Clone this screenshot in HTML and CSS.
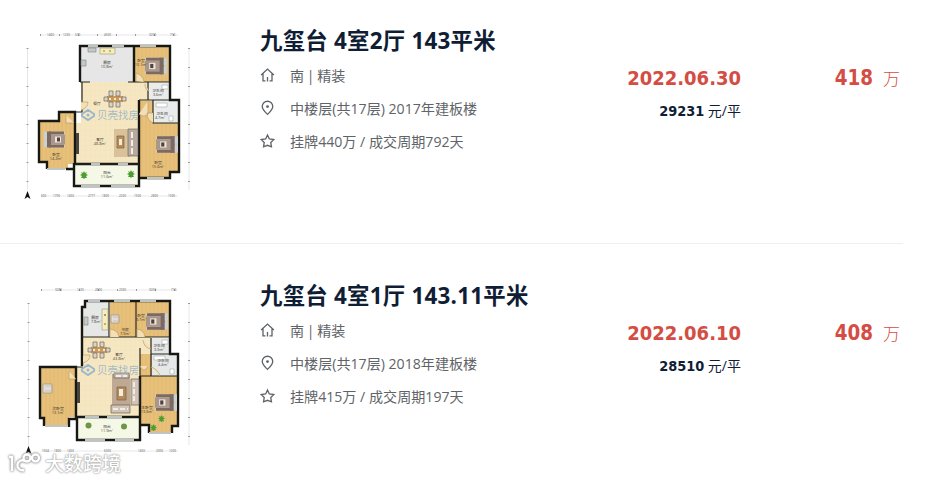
FILE: index.html
```html
<!DOCTYPE html>
<html lang="zh-CN">
<head>
    <meta charset="UTF-8">
    <meta name="viewport" content="width=device-width, initial-scale=1.0">
    <title>九玺台 成交房源</title>
    <link rel="stylesheet" href="styles.css">
</head>
<body>
    <!-- Shared icons and furniture -->
    <svg class="symbols" width="0" height="0">
        <symbol id="icon-home" viewBox="0 0 16 16">
            <path d="M1.200 8 8 1.700 14.800 8M3.200 6.500V14.200h2.600M12.800 6.500V14.200h-2.600M8 14.800V10"/>
        </symbol>
        <symbol id="icon-pin" viewBox="0 0 16 16">
            <path d="M8 14.800C5.500 12.200 2.400 9.600 2.400 6.400a5.600 5.600 0 0 1 11.200 0C13.600 9.600 10.500 12.200 8 14.800Z"/>
            <circle class="dot" cx="8" cy="6.500" r="1.500"/>
        </symbol>
        <symbol id="icon-star" viewBox="0 0 16 16">
            <path d="m8 1.700 2 4.100 4.800.600-3.300 3.300.700 4.500L8 12.600l-4.200 1.600.700-4.500L1.200 6.400 6 5.800Z"/>
        </symbol>
        <symbol id="bed" viewBox="0 0 22 18">
            <path fill="#dcc8ae" d="M0 1h21v16H0z"/>
            <path fill="#7b6a62" d="M1 1h15v3H1zM1 14h15v3H1z"/>
            <path fill="#a8978c" d="M0 4h16v10H0z"/>
            <path fill="#f1e5d8" d="M4 6h6v6H4z"/>
            <path fill="#4f433f" d="M5 7h3v4H5z"/>
            <path fill="#7c6a62" d="M14 1h4v16h-4z"/>
            <path fill="#c6d2d8" d="M18 2h3v6h-3zM18 10h3v6h-3z"/>
        </symbol>
        <symbol id="dining" viewBox="0 0 24 18">
            <path fill="#c9995a" d="M4 6h16v6H4z"/>
            <path fill="#d9d5c9" stroke="#70665d" stroke-width=".7" d="M6 1h4v5H6zM13 1h4v5h-4zM6 12h4v5H6zM13 12h4v5h-4zM1 7h4v4H1zM19 7h4v4h-4z"/>
            <path stroke="#f6e8cf" stroke-width="2" stroke-dasharray="2 3" d="M6 9h13"/>
        </symbol>
        <symbol id="plant" viewBox="0 0 8 8">
            <path fill="#4c9d32" d="m4 0 1 2 2-1-1 2 2 1-2 1 1 2-2 0-1 1-1-1-2 0 1-2-2-1 2-1-1-2 2 1Z"/>
        </symbol>
        <symbol id="shell" viewBox="0 0 14 12">
            <path fill="none" stroke="#9bb7cf" stroke-width="2" d="m1 5 6-4 6 4v2l-6 4-6-4Z"/>
            <circle fill="#9bb7cf" cx="7" cy="6" r="1.500"/>
        </symbol>
        <pattern id="wood" width="8" height="6" patternUnits="userSpaceOnUse">
            <path fill="#e7c07a" d="M0 0h8v6H0z"/>
            <path stroke="#dcb167" stroke-width=".5" d="M2 0v6M6 0v6"/>
        </pattern>
        <pattern id="tile" width="5" height="5" patternUnits="userSpaceOnUse">
            <path fill="#f5e7c1" d="M0 0h5v5H0z"/>
            <path fill="none" stroke="#efdfb4" stroke-width=".5" d="M0 0h5M0 0v5"/>
        </pattern>
    </svg>

    <main class="list">
        <article class="item">
            <svg class="plan" viewBox="20 25 175 180">
                <!-- Measurements -->
                <g class="ruler">
                    <path d="M40 35h138M27.500 48v142M189 48v142M41 196h137"/>
                    <path class="ticks" d="M40 35h138M27.500 48v142M189 48v142"/>
                    <text x="47" y="36">1460</text><text x="63" y="36">1230</text><text x="75" y="36">570</text><text x="104" y="36">4500</text><text x="149" y="36">3200</text><text x="170" y="36">710</text>
                    <text x="41" y="197">600</text><text x="53" y="197">1700</text><text x="67" y="197">1450</text><text x="88" y="197">2777</text><text x="102" y="197">1800</text><text x="119" y="197">2230</text><text x="134" y="197">1500</text><text x="151" y="197">2800</text><text x="168" y="197">1590</text>
                </g>
                <path fill="#111" d="m27.500 191 3 8-3-2-3 2z"/>
                <!-- Rooms -->
                <path fill="url(#tile)" d="M81 82h68v20h-10v62H75v-41h6z"/>
                <path fill="#e6e6e6" d="M81 47h53v35H81z"/>
                <path fill="url(#wood)" d="M135 47h34v35h-34zM139 101h14v22h27v49h-9v6h-32zM59 113h16v51h-7v5H46v-7h-6v-40h19z"/>
                <path fill="#e9eceb" d="M149 83h20v18h-20zM153 101h27v22h-27z"/>
                <path fill="#f5f8e7" d="M75 164h64v21H75z"/>
                <path class="walls" d="M80 82V46h90v54h9v72h-9v6h-31v8H74v-17M74 163v6H66M47 169v-7h-8v-41h20v-9h16v52h65M134 46v36M139 100v78"/>
                <path class="thin" d="M134 82h36M153 101v22h27M80 82h10M128 82h20v18h21M139 100h14v23M75 112h7v-30M75 164h64"/>
                <path class="window" d="M88 46h10M112 46h12M140 46h16M47 169h18M81 186h19M111 186h24M147 178h17M91 164h9M118 164h10"/>
                <path class="door" d="M136 81v-8q7 2 8 9M81 102h7q0 6-7 8M66 115v8h8M139 114q5 4 9 0V101M149 91q-4-1-4-7M153 113h-6q0 7 6 10"/>
                <!-- Furniture -->
                <path fill="#c4c8c7" stroke="#7d8080" stroke-width=".6" d="M88 48h8v4h-8zM81 60h5v6h-5z"/>
                <path fill="#f5edc0" stroke="#9e976d" stroke-width=".6" d="M100 48h15v6h-15z"/>
                <circle fill="#c5a32f" cx="104" cy="51" r="1"/><circle fill="#b4a94c" cx="110" cy="51" r="1"/>
                <use href="#bed" x="145" y="56" width="23" height="20"/>
                <use href="#bed" x="156" y="134" width="23" height="21"/>
                <use href="#bed" x="-65" y="-150" width="22" height="21" transform="rotate(180)"/>
                <use href="#dining" x="103" y="89" width="24" height="20"/>
                <path fill="#d9c29a" d="M114 129h16v28h-16z"/>
                <path fill="#b8aaa0" stroke="#625a56" stroke-width=".6" d="M128 129h10v27h-10z"/>
                <path stroke="#f4eee3" stroke-width="2" stroke-dasharray="6 2" d="M132 132v22"/>
                <path fill="#b98a54" stroke="#75654f" stroke-width=".7" d="M117 136h7v12h-7z"/>
                <path fill="#f3eadb" d="M119 139h3v6h-3z"/>
                <path fill="#484541" d="M76 133h3v21h-3z"/>
                <path fill="#fff" stroke="#a4aaaa" stroke-width=".6" d="M162 85h6v4h-6zM156 103h11v4h-11zM169 116h4v5h-4z"/>
                <use href="#plant" x="80" y="171" width="8" height="8"/>
                <use href="#plant" x="127" y="170" width="8" height="8"/>
                <g class="labels">
                    <text x="107" y="64">厨房</text><text x="107" y="68">10.8m²</text>
                    <text x="141" y="62">卧室</text><text x="141" y="66">10.1m²</text>
                    <text x="158" y="92">卫生间</text><text x="158" y="96">3.6m²</text>
                    <text x="162" y="115">卫生间</text><text x="160" y="119">4.7m²</text>
                    <text x="97" y="105">餐厅</text><text x="100" y="141">客厅</text><text x="100" y="145">48.8m²</text>
                    <text x="56" y="156">卧室</text><text x="56" y="160">14.2m²</text>
                    <text x="158" y="164">卧室</text><text x="158" y="168">15.6m²</text>
                    <text x="107" y="174">阳台</text><text x="107" y="178">11.6m²</text>
                </g>
                <use href="#shell" x="81" y="109" width="14" height="12"/>
                <text class="shell-name" x="97" y="119">贝壳找房</text>
            </svg>
            <div class="info">
                <h2>九玺台 4室2厅 143平米</h2>
                <p><svg class="icon"><use href="#icon-home"/></svg><span class="tight">南 | 精装</span></p>
                <p><svg class="icon"><use href="#icon-pin"/></svg><span>中楼层(共17层) 2017年建板楼</span></p>
                <p><svg class="icon"><use href="#icon-star"/></svg><span>挂牌440万 / 成交周期792天</span></p>
            </div>
            <div class="deal">
                <div class="date">2022.06.30</div>
                <div class="unit"><b>29231</b> 元/平</div>
            </div>
            <div class="price"><b>418</b><span>万</span></div>
        </article>

        <article class="item">
            <svg class="plan" viewBox="20 280 175 180">
                <g class="ruler">
                    <path d="M41 290h136M28.500 303v148M189 303v142M41 451h137"/>
                    <path class="ticks" d="M41 290h136M28.500 303v148M189 303v142"/>
                    <text x="55" y="291">3285</text><text x="77" y="291">1225</text><text x="95" y="291">2600</text><text x="119" y="291">2330</text><text x="149" y="291">3250</text><text x="171" y="291">710</text>
                    <text x="42" y="452">1504</text><text x="54" y="452">1800</text><text x="67" y="452">1450</text><text x="104" y="452">6300</text><text x="138" y="452">1450</text><text x="156" y="452">2000</text><text x="169" y="452">1200</text>
                </g>
                <path fill="#111" d="m28.500 446 3 8-3-2-3 2z"/>
                <path fill="url(#tile)" d="M83 337h68v39h-11v41H76v-50h7z"/>
                <path fill="#e6e7e7" d="M86 302h23v35H83v-29h3zM151 338h19v16h-19zM151 354h27v22h-27z"/>
                <path fill="url(#wood)" d="M110 302h59v35h-59zM140 354h12v22h26v50h-7v7h-23v-8h-8zM40 368h36v49h-7v9H44v-9h-4z"/>
                <path fill="#f5f8e7" d="M77 418h62v21H77z"/>
                <path class="walls" d="M82 366v-59h3v-6h85v53h8v72h-6v7M149 433v-8h-9v15H77v-13M77 417v10M69 427v-8h7v-52H40v51h4v8M140 376v50M77 417h63"/>
                <path class="thin" d="M109 302v35M136 302v35M82 337h88M151 338v16M140 376h11M76 367h7M151 354h19M151 354v22h27M140 348v28"/>
                <path class="window" d="M88 301h12M114 301h16M140 301h16M45 426h23M149 433h22M85 440h20M115 440h19M85 417h14M107 417h15"/>
                <path class="door" d="M110 337v-8q8 1 9 8M137 337v-8q7 1 8 8M151 349q-7-1-8-9M83 355h7q0 6-7 8M69 371v8h7M140 366q4 8 8 0M151 367q7 2 9 9"/>
                <path fill="#c5caca" stroke="#7d8080" stroke-width=".6" d="M84 317h4v8h-4z"/>
                <path fill="#f5edc0" stroke="#9e976d" stroke-width=".6" d="M102 309h6v21h-6z"/>
                <circle fill="#7e854f" cx="105" cy="315" r="1"/><circle fill="#b79b36" cx="105" cy="324" r="1"/>
                <path fill="#e2ddd6" stroke="#9a948c" stroke-width=".7" d="M111 315h8v8h-8zM43 384h9v9h-9z"/>
                <path fill="none" stroke="#b8b0a5" stroke-width=".6" d="M113 317h6v4h-6M45 386h7v5h-7"/>
                <use href="#bed" x="146" y="311" width="23" height="21"/>
                <use href="#bed" x="155" y="392" width="23" height="21"/>
                <use href="#dining" x="87" y="340" width="24" height="20"/>
                <path fill="#bfa992" d="M112 374h18v31h-18z"/>
                <path fill="#b48b59" stroke="#76644e" stroke-width=".7" d="M117 387h9v13h-9z"/>
                <path fill="#f4eddd" d="M119 389h4v7h-4z"/>
                <path fill="#d0c3b8" stroke="#6c6058" stroke-width=".7" d="M131 379h8v26h-8zM111 405h19v8h-19zM114 373h15v5h-15z"/>
                <path stroke="#f5ebdf" stroke-width="2" stroke-dasharray="5 2" d="M134 382v21M113 409h15M116 376h11"/>
                <path fill="#484541" d="M77 382h3v21h-3z"/>
                <path fill="#fff" stroke="#a4aaaa" stroke-width=".6" d="M162 340h6v4h-6zM154 356h11v4h-11zM170 369h4v5h-4z"/>
                <circle fill="#719547" cx="88.500" cy="425.500" r="3"/><circle fill="#719547" cx="124" cy="426.500" r="3"/>
                <use href="#plant" x="158" y="415" width="7" height="7"/>
                <use href="#plant" x="150" y="424" width="7" height="7"/>
                <g class="labels">
                    <text x="95" y="319">厨房</text><text x="96" y="323">7.8m²</text>
                    <text x="125" y="331">书房</text><text x="125" y="335">7.9m²</text>
                    <text x="141" y="317">卧室</text><text x="141" y="321">9.7m²</text>
                    <text x="159" y="347">卫生间</text><text x="159" y="351">3.3m²</text>
                    <text x="163" y="362">卫生间</text><text x="163" y="366">4.4m²</text>
                    <text x="119" y="356">客厅</text><text x="119" y="360">43.8m²</text>
                    <text x="58" y="410">次卧室</text><text x="58" y="414">13.1m²</text>
                    <text x="147" y="409">主卧室</text><text x="147" y="413">13.6m²</text>
                    <text x="107" y="428">阳台</text><text x="107" y="432">11.9m²</text>
                </g>
                <use href="#shell" x="81" y="364" width="14" height="12"/>
                <text class="shell-name" x="97" y="374">贝壳找房</text>
            </svg>
            <div class="info">
                <h2>九玺台 4室1厅 143.11平米</h2>
                <p><svg class="icon"><use href="#icon-home"/></svg><span class="tight">南 | 精装</span></p>
                <p><svg class="icon"><use href="#icon-pin"/></svg><span>中楼层(共17层) 2018年建板楼</span></p>
                <p><svg class="icon"><use href="#icon-star"/></svg><span>挂牌415万 / 成交周期197天</span></p>
            </div>
            <div class="deal">
                <div class="date">2022.06.10</div>
                <div class="unit"><b>28510</b> 元/平</div>
            </div>
            <div class="price"><b>408</b><span>万</span></div>
        </article>
    </main>

    <div class="watermark">
        <svg viewBox="0 0 34 22">
            <path d="M2 5h3v14M18 9a5 5 0 1 0-1 9"/>
            <circle cx="20" cy="6" r="3.500"/><circle cx="28.500" cy="6" r="3.500"/>
        </svg>
        <span>大数跨境</span>
    </div>
</body>
</html>
```
FILE: styles.css
```css
:root {
    --title: #0f1d35;
    --text: #606468;
    --red: #d44d44;
    --border: #eeeff0;
}

* {
    box-sizing: border-box;
}

body {
    margin: 0;
    height: 480px;
    overflow: hidden;
    background: #fff;
    font-family: "Open Sans", "Noto Sans CJK SC", sans-serif;
}

.symbols {
    position: absolute;
}

.list {
    width: 903px;
}

.item {
    display: flex;
    height: 244px;
    padding: 25px 0 0 20px;
    border-bottom: 1px solid var(--border);
}

.item + .item {
    height: 236px;
    padding-top: 36px;
    border-bottom: none;
}

.plan {
    width: 175px;
    height: 180px;
    flex: none;
}

.walls {
    fill: none;
    stroke: #171713;
    stroke-width: 2.4;
}

.thin {
    fill: none;
    stroke: #292820;
    stroke-width: 1.2;
}

.window {
    fill: none;
    stroke: #bfc5c2;
    stroke-width: 2;
}

.door {
    fill: #f3dfb3;
    stroke: #b19866;
    stroke-width: .6;
}

.ruler path {
    fill: none;
    stroke: #ccc;
    stroke-width: .5;
}

.ruler .ticks {
    stroke: #999;
    stroke-width: 2;
    stroke-dasharray: 1 18;
}

.ruler text {
    font-size: 3px;
    fill: #555;
}

.labels text {
    font-size: 3.8px;
    text-anchor: middle;
    fill: #3f3b34;
}

.shell-name {
    font-size: 10.5px;
    fill: #94b2cb;
    fill-opacity: .85;
}

.info {
    width: 346px;
    padding-left: 65px;
    white-space: nowrap;
}

.info h2 {
    margin: 0 0 1px;
    font-size: 22.4px;
    line-height: 32px;
    letter-spacing: .25px;
    color: var(--title);
}

.info p {
    display: flex;
    align-items: center;
    height: 33px;
    margin: 0;
    font-size: 14.1px;
    color: var(--text);
}

.tight {
    word-spacing: -1px;
}

.icon {
    width: 15px;
    height: 16px;
    margin-right: 15px;
    fill: none;
    stroke: #5f6367;
    stroke-width: 1.4;
}

.dot {
    fill: #5f6367;
    stroke: none;
}

.deal {
    width: 200px;
    padding-top: 39px;
    text-align: right;
    color: var(--title);
}

.date,
.deal b,
.price b {
    font-family: "DejaVu Sans Condensed", "DejaVu Sans", sans-serif;
    font-stretch: condensed;
    font-weight: bold;
}

.date {
    font-size: 20px;
    line-height: 28px;
    color: var(--red);
}

.unit {
    margin-top: 8px;
    font-size: 14px;
    line-height: 22px;
}

.unit b {
    font-size: 14.4px;
}

.price {
    display: flex;
    justify-content: flex-end;
    gap: 10px;
    width: 159px;
    padding-top: 39px;
    color: var(--red);
    font-size: 17px;
    line-height: 28px;
}

.price b {
    font-size: 20.4px;
}

.price span {
    padding-top: 1px;
    font-weight: 300;
}

/* Site watermark over the lower left corner */
.watermark {
    position: absolute;
    left: 7px;
    top: 451px;
    display: flex;
    align-items: center;
    gap: 4px;
    height: 24px;
    color: #fff;
    font-size: 19px;
    font-weight: 500;
    text-shadow: 0 0 1px #999, 0 0 2px #aaa, 0 0 3px #ccc;
}

.watermark svg {
    width: 34px;
    height: 22px;
    fill: none;
    stroke: #fff;
    stroke-width: 2.4;
    filter: drop-shadow(0 0 1px #888) drop-shadow(0 0 1px #bbb);
}
```
